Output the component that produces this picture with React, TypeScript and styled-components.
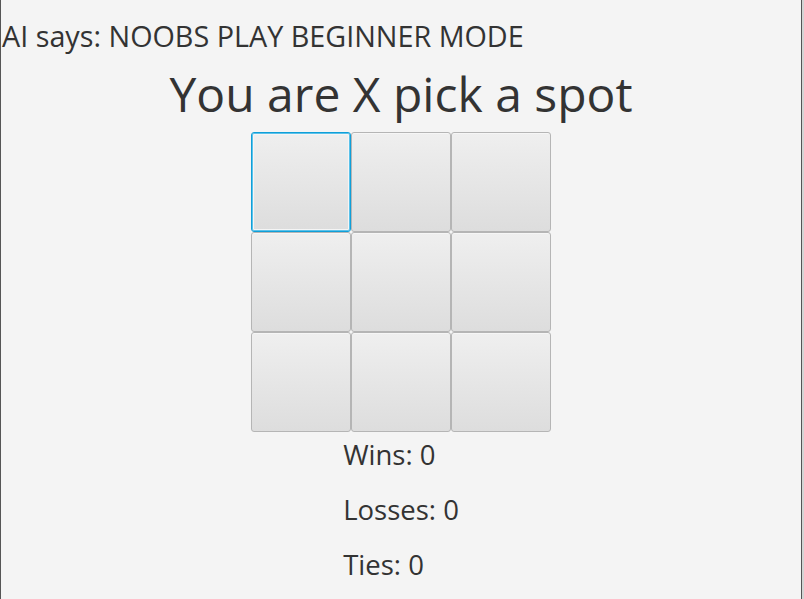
import React from "react";
import styled, { createGlobalStyle } from "styled-components";

const Global = createGlobalStyle`
  html, body { margin: 0; padding: 0; background: #d4d4d4; }
  body { width: 804px; height: 599px; overflow: hidden; }
  #root { width: 804px; height: 599px; }
`;

const Frame = styled.div`
  box-sizing: border-box;
  width: 802px;
  height: 599px;
  background: #f4f4f4;
  border-left: 1px solid #555;
  border-right: 1px solid #555;
  font-family: "Open Sans", "Noto Sans", sans-serif;
  color: #333;
  display: flex;
  flex-direction: column;
  align-items: center;
`;

const AiLine = styled.div`
  align-self: flex-start;
  margin-top: 16px;
  margin-left: 1px;
  font-size: 28.75px;
  line-height: 40px;
  white-space: nowrap;
`;

const Title = styled.div`
  margin-top: 8px;
  font-size: 48px;
  line-height: 60px;
  white-space: nowrap;
`;

const Board = styled.div`
  margin-top: 8px;
  display: grid;
  grid-template-columns: repeat(3, 100px);
  grid-template-rows: repeat(3, 100px);
`;

const Cell = styled.button<{ $focused?: boolean }>`
  box-sizing: border-box;
  width: 100px;
  height: 100px;
  margin: 0;
  padding: 0;
  border-radius: 3px;
  border: 1px solid ${(p) => (p.$focused ? "#109fd8" : "#b5b5b5")};
  box-shadow: ${(p) =>
    p.$focused
      ? "inset 0 0 0 1px #5cc2ea, inset 0 0 0 2px #f5f5f5"
      : "inset 0 1px 0 #f6f6f6"};
  background: linear-gradient(#efefef, #dddddd);
  outline: none;
`;

const Stats = styled.div`
  margin-top: 5px;
  display: flex;
  flex-direction: column;
  align-items: flex-start;
  gap: 19px;
`;

const Stat = styled.div`
  font-size: 27.5px;
  line-height: 36px;
  white-space: nowrap;
`;

export default function App() {
  return (
    <>
      <Global />
      <Frame>
        <AiLine>AI says: NOOBS PLAY BEGINNER MODE</AiLine>
        <Title>You are X pick a spot</Title>
        <Board>
          {Array.from({ length: 9 }).map((_, i) => (
            <Cell key={i} $focused={i === 0} />
          ))}
        </Board>
        <Stats>
          <Stat>Wins: 0</Stat>
          <Stat>Losses: 0</Stat>
          <Stat>Ties: 0</Stat>
        </Stats>
      </Frame>
    </>
  );
}
